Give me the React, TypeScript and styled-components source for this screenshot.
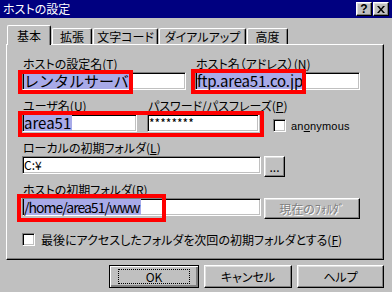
import React from "react";
import styled, { createGlobalStyle } from "styled-components";

const GlobalStyle = createGlobalStyle`
  html, body {
    margin: 0;
    padding: 0;
    background: #c0c0c0;
  }
  body {
    font-family: "Noto Sans CJK JP", "Noto Sans", sans-serif;
  }
  * {
    box-sizing: border-box;
  }
`;

const Window = styled.div`
  width: 392px;
  height: 292px;
  background: #c0c0c0;
  display: flex;
  flex-direction: column;
  overflow: hidden;
  color: #000;
  font-size: 12px;
  font-feature-settings: "palt";
`;

const TitleBar = styled.div`
  height: 18px;
  background: #000080;
  color: #fff;
  display: flex;
  align-items: center;
  padding: 0 3px 0 3px;
`;

const Title = styled.div`
  flex: 1;
  font-size: 12px;
  line-height: 18px;
`;

const CaptionButtons = styled.div`
  display: flex;
  gap: 1px;
`;

const raised = `
  background: #c0c0c0;
  border: 1px solid;
  border-color: #fff #000 #000 #fff;
  box-shadow: inset -1px -1px #808080, inset 1px 1px #dfdfdf;
`;

const sunken = `
  border: 1px solid;
  border-color: #808080 #fff #fff #808080;
  box-shadow: inset 1px 1px #000, inset -1px -1px #c0c0c0;
`;

const CaptionButton = styled.div`
  ${raised}
  width: 16px;
  height: 14px;
  display: flex;
  align-items: center;
  justify-content: center;
  color: #000;
  font-family: "Liberation Sans", sans-serif;
  font-weight: bold;
  font-size: 12px;
  line-height: 12px;
`;

const Body = styled.div`
  padding: 7px 0 0 6px;
  display: flex;
  flex-direction: column;
`;

const TabRow = styled.div`
  height: 19px;
  display: flex;
  align-items: flex-end;
  gap: 1px;
  padding-left: 1px;
`;

const Tab = styled.div<{ $active?: boolean; $w: number }>`
  position: relative;
  z-index: ${(p) => (p.$active ? 1 : 0)};
  width: ${(p) => p.$w}px;
  height: ${(p) => (p.$active ? 20 : 16)}px;
  margin-bottom: ${(p) => (p.$active ? -1 : 0)}px;
  background: #c0c0c0;
  border-top: 1px solid #fff;
  border-left: 1px solid #fff;
  border-right: 1px solid #000;
  box-shadow: inset -1px 0 #808080;
  border-radius: 2px 2px 0 0;
  text-align: center;
  font-size: 12px;
  line-height: 14px;
  padding-top: ${(p) => (p.$active ? 3 : 1)}px;
`;

const Panel = styled.div`
  width: 378px;
  height: 216px;
  border: 1px solid;
  border-color: #fff #000 #000 #fff;
  box-shadow: inset -1px -1px #808080;
  padding: 12px 0 0 15px;
  display: flex;
  flex-direction: column;
`;

const Row = styled.div<{ $top?: number; $gap?: number }>`
  display: flex;
  align-items: flex-start;
  margin-top: ${(p) => p.$top ?? 0}px;
  gap: ${(p) => p.$gap ?? 0}px;
`;

const Field = styled.div<{ $w?: number }>`
  display: flex;
  flex-direction: column;
  width: ${(p) => (p.$w ? `${p.$w}px` : "auto")};
`;

const Label = styled.div`
  font-size: 12px;
  line-height: 14px;
  margin-bottom: 1px;
  padding-left: 1px;
  white-space: nowrap;
`;

const TextBox = styled.div<{ $w: number }>`
  ${sunken}
  position: relative;
  width: ${(p) => p.$w}px;
  height: 18px;
  background: #fff;
  padding: 0 0 0 1px;
  display: flex;
  align-items: center;
  white-space: nowrap;
`;

const Entry = styled.span<{ $size: number; $sel?: boolean; $track?: number }>`
  font-size: ${(p) => p.$size}px;
  line-height: 16px;
  letter-spacing: ${(p) => p.$track ?? 0}px;
  font-feature-settings: normal;
  background: ${(p) => (p.$sel ? "#a8aae8" : "transparent")};
  padding-right: ${(p) => (p.$sel ? 1 : 0)}px;
`;

const Mark = styled.span<{ $x: number; $y: number; $w: number; $h: number }>`
  position: absolute;
  z-index: 2;
  left: ${(p) => p.$x}px;
  top: ${(p) => p.$y}px;
  width: ${(p) => p.$w}px;
  height: ${(p) => p.$h}px;
  border: 4px solid #ff0000;
  pointer-events: none;
`;

const Button = styled.div<{ $w: number; $h?: number; $disabled?: boolean }>`
  ${raised}
  width: ${(p) => p.$w}px;
  height: ${(p) => p.$h ?? 21}px;
  display: flex;
  align-items: center;
  justify-content: center;
  font-size: 12px;
  color: ${(p) => (p.$disabled ? "#808080" : "#000")};
  text-shadow: ${(p) => (p.$disabled ? "1px 1px #fff" : "none")};
  white-space: nowrap;
`;

const DefaultButton = styled(Button)`
  border-color: #000;
  box-shadow: inset 1px 1px #fff, inset -1px -1px #808080, inset -2px -2px #808080;
`;

const FocusRing = styled.span`
  border: 1px dotted #000;
  width: 72px;
  height: 15px;
  display: flex;
  align-items: center;
  justify-content: center;
`;

const Check = styled.span`
  ${sunken}
  width: 13px;
  height: 13px;
  background: #fff;
  flex: none;
`;

const CheckGroup = styled.div<{ $ml?: number; $mt?: number; $gap: number }>`
  display: flex;
  align-items: center;
  gap: ${(p) => p.$gap}px;
  margin-left: ${(p) => p.$ml ?? 0}px;
  margin-top: ${(p) => p.$mt ?? 0}px;
`;

const SmallLatin = styled.span`
  font-family: "Liberation Sans", sans-serif;
  font-size: 11px;
  letter-spacing: 0.2px;
`;

const Footer = styled.div`
  display: flex;
  justify-content: flex-end;
  gap: 5px;
  margin-top: 5px;
  padding-right: 8px;
`;

const tabs = [
  { label: "基本", w: 44, active: true },
  { label: "拡張", w: 40 },
  { label: "文字コード", w: 65 },
  { label: "ダイアルアップ", w: 87 },
  { label: "高度", w: 41 },
];

const App: React.FC = () => {
  return (
    <>
      <GlobalStyle />
      <Window>
        <TitleBar>
          <Title>ホストの設定</Title>
          <CaptionButtons>
            <CaptionButton>?</CaptionButton>
            <CaptionButton>
              <svg width="8" height="7" viewBox="0 0 8 7">
                <path d="M0 0h2l2 2.5L6 0h2L5 3.5 8 7H6L4 4.5 2 7H0l3-3.5z" fill="#000" />
              </svg>
            </CaptionButton>
          </CaptionButtons>
        </TitleBar>
        <Body>
          <TabRow>
            {tabs.map((t) => (
              <Tab key={t.label} $w={t.w} $active={t.active}>
                {t.label}
              </Tab>
            ))}
          </TabRow>
          <Panel>
            <Row $gap={9}>
              <Field $w={164}>
                <Label>
                  ホストの設定名(<u>T</u>)
                </Label>
                <TextBox $w={164}>
                  <Entry $size={15} $sel>レンタルサーバ</Entry>
                  <Mark $x={-5} $y={-3} $w={115} $h={24} />
                </TextBox>
              </Field>
              <Field $w={165}>
                <Label>
                  ホスト名（アドレス）(<u>N</u>)
                </Label>
                <TextBox $w={165}>
                  <Entry $size={15} $sel $track={-0.2}>ftp.area51.co.jp</Entry>
                  <Mark $x={-5} $y={-4} $w={115} $h={25} />
                </TextBox>
              </Field>
            </Row>
            <Row $top={9} $gap={10}>
              <Field $w={115}>
                <Label>
                  ユーザ名(<u>U</u>)
                </Label>
                <TextBox $w={115}>
                  <Entry $size={15} $sel>area51</Entry>
                  <Mark $x={-5} $y={-4} $w={246} $h={26} />
                </TextBox>
              </Field>
              <Field $w={112}>
                <Label>
                  パスワード/パスフレーズ(<u>P</u>)
                </Label>
                <TextBox $w={112}>
                  <Entry $size={12}>********</Entry>
                </TextBox>
              </Field>
              <CheckGroup $ml={4} $mt={20} $gap={5}>
                <Check />
                <SmallLatin>
                  an<u>o</u>nymous
                </SmallLatin>
              </CheckGroup>
            </Row>
            <Field>
              <Row $top={9}>
                <Label>
                  ローカルの初期フォルダ(<u>L</u>)
                </Label>
              </Row>
              <Row $gap={3}>
                <TextBox $w={239}>
                  <Entry $size={12}>C:¥</Entry>
                </TextBox>
                <Button $w={21}>...</Button>
              </Row>
            </Field>
            <Field>
              <Row $top={6}>
                <Label>
                  ホストの初期フォルダ(<u>R</u>)
                </Label>
              </Row>
              <Row $gap={3}>
                <TextBox $w={239}>
                  <Entry $size={14} $sel $track={-1}>/home/area51/www</Entry>
                  <Mark $x={-6} $y={-5} $w={149} $h={28} />
                </TextBox>
                <Button $w={96} $disabled>
                  現在のﾌｫﾙﾀﾞ
                </Button>
              </Row>
            </Field>
            <CheckGroup $mt={12} $gap={6}>
              <Check />
              <span>
                最後にアクセスしたフォルダを次回の初期フォルダとする(<u>F</u>)
              </span>
            </CheckGroup>
          </Panel>
          <Footer>
            <DefaultButton $w={90} $h={23}>
              <FocusRing>OK</FocusRing>
            </DefaultButton>
            <Button $w={88} $h={23}>キャンセル</Button>
            <Button $w={87} $h={23}>ヘルプ</Button>
          </Footer>
        </Body>
      </Window>
    </>
  );
};

export default App;
